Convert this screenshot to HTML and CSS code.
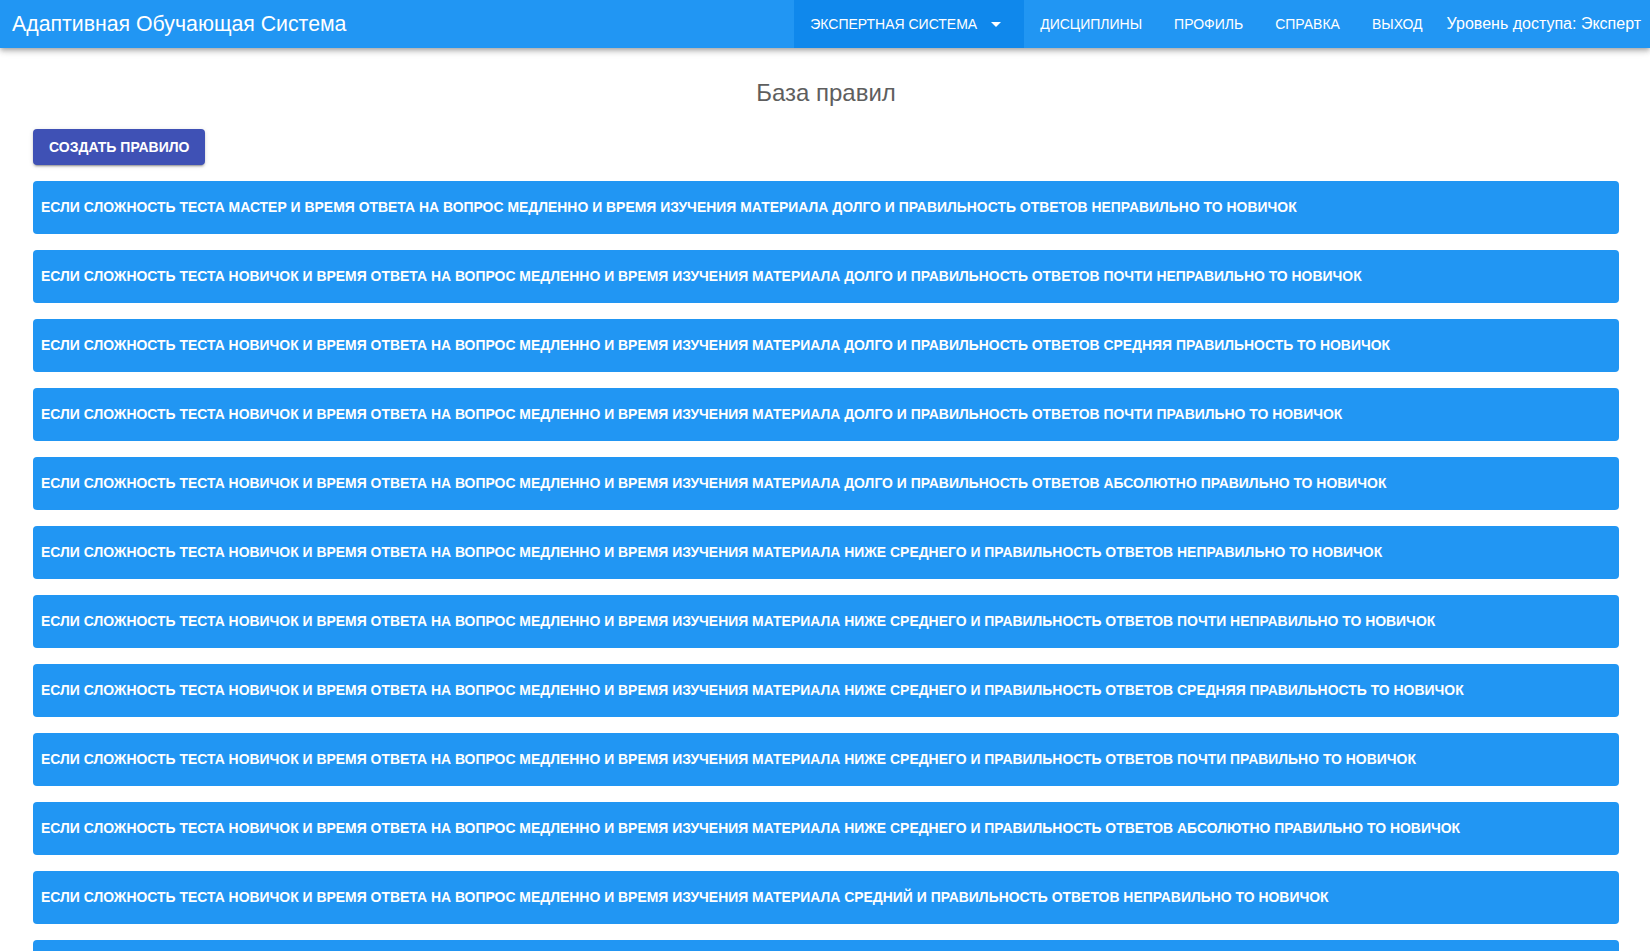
FILE: index.html
```html
<!DOCTYPE html>
<html lang="ru">
<head>
<meta charset="utf-8">
<title>База правил</title>
<link rel="stylesheet" href="styles.css">
</head>
<body>
<header class="toolbar">
  <div class="brand">Адаптивная Обучающая Система</div>
  <nav class="nav">
    <a class="nav-item active">ЭКСПЕРТНАЯ СИСТЕМА
      <svg class="caret" viewBox="0 0 24 24" width="24" height="24"><path d="M7 10l5 5 5-5z" fill="#fff"/></svg>
    </a>
    <a class="nav-item">ДИСЦИПЛИНЫ</a>
    <a class="nav-item">ПРОФИЛЬ</a>
    <a class="nav-item">СПРАВКА</a>
    <a class="nav-item">ВЫХОД</a>
    <span class="level">Уровень доступа: Эксперт</span>
  </nav>
</header>
<main class="content">
  <h1 class="page-title">База правил</h1>
  <button class="create-btn">СОЗДАТЬ ПРАВИЛО</button>
  <ul class="rules">
    <li class="rule">ЕСЛИ СЛОЖНОСТЬ ТЕСТА МАСТЕР И ВРЕМЯ ОТВЕТА НА ВОПРОС МЕДЛЕННО И ВРЕМЯ ИЗУЧЕНИЯ МАТЕРИАЛА ДОЛГО И ПРАВИЛЬНОСТЬ ОТВЕТОВ НЕПРАВИЛЬНО ТО НОВИЧОК</li>
    <li class="rule">ЕСЛИ СЛОЖНОСТЬ ТЕСТА НОВИЧОК И ВРЕМЯ ОТВЕТА НА ВОПРОС МЕДЛЕННО И ВРЕМЯ ИЗУЧЕНИЯ МАТЕРИАЛА ДОЛГО И ПРАВИЛЬНОСТЬ ОТВЕТОВ ПОЧТИ НЕПРАВИЛЬНО ТО НОВИЧОК</li>
    <li class="rule">ЕСЛИ СЛОЖНОСТЬ ТЕСТА НОВИЧОК И ВРЕМЯ ОТВЕТА НА ВОПРОС МЕДЛЕННО И ВРЕМЯ ИЗУЧЕНИЯ МАТЕРИАЛА ДОЛГО И ПРАВИЛЬНОСТЬ ОТВЕТОВ СРЕДНЯЯ ПРАВИЛЬНОСТЬ ТО НОВИЧОК</li>
    <li class="rule">ЕСЛИ СЛОЖНОСТЬ ТЕСТА НОВИЧОК И ВРЕМЯ ОТВЕТА НА ВОПРОС МЕДЛЕННО И ВРЕМЯ ИЗУЧЕНИЯ МАТЕРИАЛА ДОЛГО И ПРАВИЛЬНОСТЬ ОТВЕТОВ ПОЧТИ ПРАВИЛЬНО ТО НОВИЧОК</li>
    <li class="rule">ЕСЛИ СЛОЖНОСТЬ ТЕСТА НОВИЧОК И ВРЕМЯ ОТВЕТА НА ВОПРОС МЕДЛЕННО И ВРЕМЯ ИЗУЧЕНИЯ МАТЕРИАЛА ДОЛГО И ПРАВИЛЬНОСТЬ ОТВЕТОВ АБСОЛЮТНО ПРАВИЛЬНО ТО НОВИЧОК</li>
    <li class="rule">ЕСЛИ СЛОЖНОСТЬ ТЕСТА НОВИЧОК И ВРЕМЯ ОТВЕТА НА ВОПРОС МЕДЛЕННО И ВРЕМЯ ИЗУЧЕНИЯ МАТЕРИАЛА НИЖЕ СРЕДНЕГО И ПРАВИЛЬНОСТЬ ОТВЕТОВ НЕПРАВИЛЬНО ТО НОВИЧОК</li>
    <li class="rule">ЕСЛИ СЛОЖНОСТЬ ТЕСТА НОВИЧОК И ВРЕМЯ ОТВЕТА НА ВОПРОС МЕДЛЕННО И ВРЕМЯ ИЗУЧЕНИЯ МАТЕРИАЛА НИЖЕ СРЕДНЕГО И ПРАВИЛЬНОСТЬ ОТВЕТОВ ПОЧТИ НЕПРАВИЛЬНО ТО НОВИЧОК</li>
    <li class="rule">ЕСЛИ СЛОЖНОСТЬ ТЕСТА НОВИЧОК И ВРЕМЯ ОТВЕТА НА ВОПРОС МЕДЛЕННО И ВРЕМЯ ИЗУЧЕНИЯ МАТЕРИАЛА НИЖЕ СРЕДНЕГО И ПРАВИЛЬНОСТЬ ОТВЕТОВ СРЕДНЯЯ ПРАВИЛЬНОСТЬ ТО НОВИЧОК</li>
    <li class="rule">ЕСЛИ СЛОЖНОСТЬ ТЕСТА НОВИЧОК И ВРЕМЯ ОТВЕТА НА ВОПРОС МЕДЛЕННО И ВРЕМЯ ИЗУЧЕНИЯ МАТЕРИАЛА НИЖЕ СРЕДНЕГО И ПРАВИЛЬНОСТЬ ОТВЕТОВ ПОЧТИ ПРАВИЛЬНО ТО НОВИЧОК</li>
    <li class="rule">ЕСЛИ СЛОЖНОСТЬ ТЕСТА НОВИЧОК И ВРЕМЯ ОТВЕТА НА ВОПРОС МЕДЛЕННО И ВРЕМЯ ИЗУЧЕНИЯ МАТЕРИАЛА НИЖЕ СРЕДНЕГО И ПРАВИЛЬНОСТЬ ОТВЕТОВ АБСОЛЮТНО ПРАВИЛЬНО ТО НОВИЧОК</li>
    <li class="rule">ЕСЛИ СЛОЖНОСТЬ ТЕСТА НОВИЧОК И ВРЕМЯ ОТВЕТА НА ВОПРОС МЕДЛЕННО И ВРЕМЯ ИЗУЧЕНИЯ МАТЕРИАЛА СРЕДНИЙ И ПРАВИЛЬНОСТЬ ОТВЕТОВ НЕПРАВИЛЬНО ТО НОВИЧОК</li>
    <li class="rule">ЕСЛИ СЛОЖНОСТЬ ТЕСТА НОВИЧОК И ВРЕМЯ ОТВЕТА НА ВОПРОС МЕДЛЕННО И ВРЕМЯ ИЗУЧЕНИЯ МАТЕРИАЛА СРЕДНИЙ И ПРАВИЛЬНОСТЬ ОТВЕТОВ ПОЧТИ НЕПРАВИЛЬНО ТО НОВИЧОК</li>
  </ul>
</main>
</body>
</html>
```
FILE: styles.css
```css
html, body {
  margin: 0;
  padding: 0;
  background: #fff;
  font-family: "Liberation Sans", Arial, sans-serif;
}

.toolbar {
  height: 48px;
  background: #2196f3;
  color: #fff;
  display: flex;
  align-items: center;
  justify-content: space-between;
  padding: 0 9px 0 12px;
  box-shadow: 0 2px 4px -1px rgba(0,0,0,.2), 0 4px 5px 0 rgba(0,0,0,.14), 0 1px 10px 0 rgba(0,0,0,.12);
  position: relative;
  z-index: 2;
}

.brand {
  font-size: 21.3px;
  white-space: nowrap;
}

.nav {
  display: flex;
  align-items: stretch;
  height: 48px;
}

.nav-item {
  display: flex;
  align-items: center;
  padding: 0 16px;
  font-size: 14px;
  color: #fff;
  white-space: nowrap;
  cursor: pointer;
}

.nav-item.active {
  background: #0f88ec;
}

.caret {
  margin-left: 7px;
  margin-right: 0;
}

.level {
  display: flex;
  align-items: center;
  padding-left: 8px;
  font-size: 16px;
  white-space: nowrap;
}

.content {
  padding: 0 31px 0 33px;
  display: flex;
  flex-direction: column;
  align-items: flex-start;
}

.page-title {
  align-self: stretch;
  text-align: center;
  font-size: 24px;
  line-height: 28px;
  font-weight: normal;
  color: #5e5e5e;
  margin: 31px 0 22px;
}

.create-btn {
  height: 36px;
  padding: 0 16px;
  border: none;
  border-radius: 4px;
  background: #3f51b5;
  color: #fff;
  font-family: "Liberation Sans", Arial, sans-serif;
  font-weight: bold;
  font-size: 14px;
  box-shadow: 0 3px 1px -2px rgba(0,0,0,.2), 0 2px 2px 0 rgba(0,0,0,.14), 0 1px 5px 0 rgba(0,0,0,.12);
  cursor: pointer;
}

.rules {
  list-style: none;
  margin: 16px 0 0;
  padding: 0;
  align-self: stretch;
  display: flex;
  flex-direction: column;
  gap: 16px;
}

.rule {
  box-sizing: border-box;
  height: 53px;
  display: flex;
  align-items: center;
  padding: 0 8px 1px;
  background: #2196f3;
  color: #fff;
  border-radius: 4px;
  font-weight: bold;
  font-size: 13.94px;
  white-space: nowrap;
  overflow: hidden;
}
```
